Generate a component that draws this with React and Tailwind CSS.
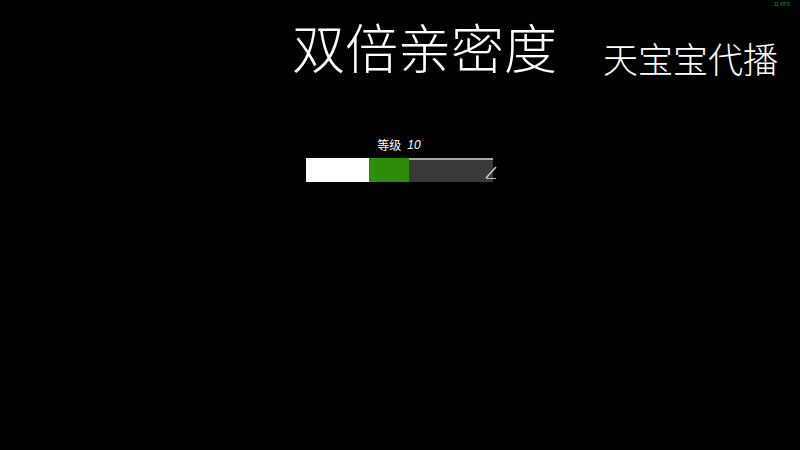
export default function App() {
  return (
    <div className="w-[800px] h-[450px] bg-black relative overflow-hidden" style={{ fontFamily: '"Noto Sans CJK SC", "Noto Sans", sans-serif' }}>
      <div className="absolute right-[10px] top-[1px] text-[5px] leading-[6px] text-[#1f9a1f]" style={{ fontFamily: '"Liberation Sans", sans-serif' }}>11 FPS</div>
      <div className="flex items-end pl-[292px] pt-[18px]">
        <div className="text-[53px] leading-[56px] font-light text-white">双倍亲密度</div>
        <div className="ml-[46px] mb-[-4px] text-[35px] leading-[40px] font-light text-white">天宝宝代播</div>
      </div>
      <div className="flex flex-col items-start pl-[306px] pt-[64px]">
        <div className="w-[186px] flex justify-center text-[12px] leading-[14px] text-white">
          <span>等级</span>
          <span className="ml-[6px] italic" style={{ fontFamily: '"Liberation Sans", sans-serif' }}>10</span>
        </div>
        <div className="mt-[6px] flex h-[24px] w-[189px]">
          <div className="w-[63px] h-full bg-white"></div>
          <div className="w-[40px] h-full bg-[#2f8b0a]"></div>
          <div className="relative w-[84px] h-full bg-[#3a3a3a] border-t-2 border-[#a8a8a8]">
            <svg className="absolute right-[-5px] bottom-[1px]" width="14" height="18" viewBox="0 0 14 18">
              <path d="M2 15 L12 4" stroke="#d0d0d0" strokeWidth="1.5" fill="none" />
              <path d="M2 15.5 L12 15.5" stroke="#bdbdbd" strokeWidth="1" fill="none" />
            </svg>
          </div>
        </div>
      </div>
    </div>
  );
}
